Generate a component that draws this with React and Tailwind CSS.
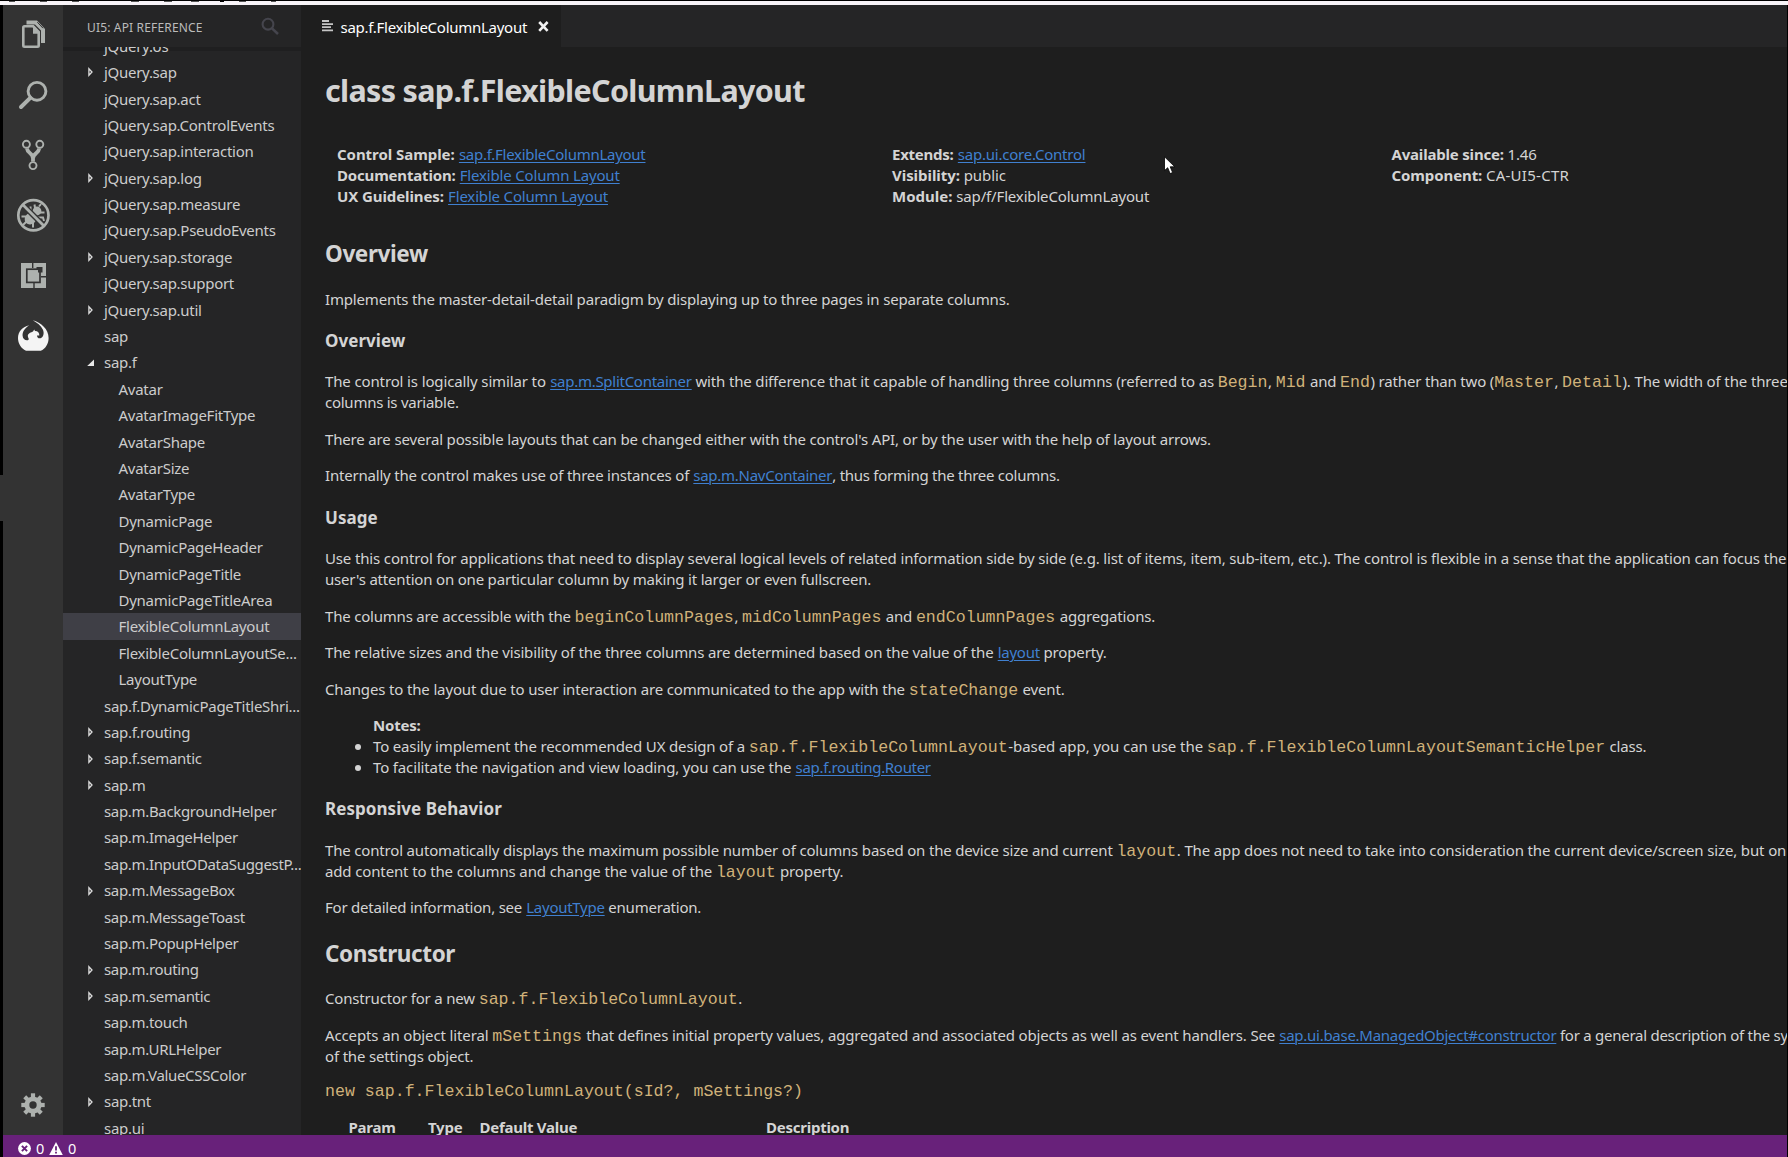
import React from "react";
import clsx from "clsx";

/* Activity bar icons: each svg's viewBox is its own 60px slot of the bar. */
const ICON = "#adb1ae";

function FilesIcon() {
  return (
    <svg className="size-[60px]" viewBox="3 5 60 60" fill="none" stroke={ICON}>
      <path d="M26.5 20.6H37L45 29V43H41V30.5L35 24.5H26.5Z" fill={ICON} stroke="none" />
      <path d="M37.3 22.2L43 28.2" stroke="#333" strokeWidth="1" />
      <path d="M24.5 26.3H33.2L38.7 32V45.5Q38.7 46.7 37.5 46.7H24.5Q23.3 46.7 23.3 45.5V27.5Q23.3 26.3 24.5 26.3Z" fill="#333" strokeWidth="2.6" />
      <path d="M33 26.5V33.7H39V31.5L34.5 26.5Z" fill={ICON} stroke="none" />
    </svg>
  );
}

function SearchIcon() {
  return (
    <svg className="size-[60px]" viewBox="3 65 60 60" fill="none" stroke={ICON}>
      <circle cx="37" cy="91.3" r="8.9" strokeWidth="2.9" />
      <path d="M30.3 97.8L21 107" strokeWidth="4" strokeLinecap="round" />
    </svg>
  );
}

function GitIcon() {
  return (
    <svg className="size-[60px]" viewBox="3 125 60 60" fill="none" stroke={ICON}>
      <circle cx="26.4" cy="144.3" r="3.5" strokeWidth="1.9" />
      <circle cx="39.8" cy="144.3" r="3.5" strokeWidth="1.9" />
      <circle cx="33" cy="165.6" r="3.5" strokeWidth="1.9" />
      <path d="M27 148.5C27.5 153.5 33 153 33 158.5V161.5M39.2 148.5C38.7 153.5 33 153 33 158.5" strokeWidth="3.8" />
    </svg>
  );
}

function DebugIcon() {
  return (
    <svg className="size-[60px]" viewBox="3 185 60 60" fill="none" stroke={ICON}>
      <ellipse cx="30.8" cy="218.4" rx="5.6" ry="6.6" transform="rotate(45 30.8 218.4)" fill={ICON} stroke="none" />
      <circle cx="37" cy="211" r="4.4" fill={ICON} stroke="none" />
      <path d="M30.5 213V206.5M35 208L34.5 204.5M40 212.5H44.5M39 206.5L41 204M27 216.5H21.5M28 220L23 225M33 221.5V227.5M36 217.5H43L44 221" strokeWidth="2" />
      <path d="M23 205L44 226" stroke="#333" strokeWidth="5.4" />
      <path d="M22.6 204.6L44 226" strokeWidth="2.8" />
      <circle cx="33.4" cy="215.3" r="15.1" strokeWidth="2.7" />
    </svg>
  );
}

function ExtensionsIcon() {
  return (
    <svg className="size-[60px]" viewBox="3 245 60 60">
      <rect x="21" y="263" width="25" height="25" fill={ICON} />
      <g stroke="#333" fill="none">
        <path d="M32.7 263V268M41 276.7H46M34 283V288" strokeWidth="1.4" />
        <rect x="26.8" y="269.2" width="13.2" height="13.2" strokeWidth="1.7" />
      </g>
      <path d="M36.5 267H42.5V272.5H38V269H36.5Z" fill="#333" />
    </svg>
  );
}

function PhoenixIcon() {
  return (
    <svg className="size-[60px]" viewBox="3 305 60 60">
      <path
        d="M32.8 320.2C41 322.5 48.6 329 48.6 338C48.6 343.8 45.5 348.8 40.8 350.8H26C21 348.4 18 343.5 18 338C18 331.5 22.5 326.6 29.3 325.2C25 328 22.3 331.5 22.6 335.8C22.8 339 25.4 340.8 27.8 340.2C30.4 339.4 27 337.4 28 334.8C28.8 332.8 31 332.4 33 331.4L34.2 329.6L35 331C38 331 39.5 333 39.3 335.6L37 335.4C37 337.2 38.3 338.8 40.5 338.2C43.5 337 44.5 333 42.8 329.4C41 325.8 37 322.5 32.8 320.2Z"
        fill="#f4f4f4"
      />
    </svg>
  );
}

function GearIcon() {
  return (
    <svg className="size-[60px]" viewBox="3 1075 60 60">
      <g fill={ICON}>
        <rect x="30.9" y="1093.3" width="4.2" height="23.4" />
        <rect x="30.9" y="1093.3" width="4.2" height="23.4" transform="rotate(45 33 1105)" />
        <rect x="30.9" y="1093.3" width="4.2" height="23.4" transform="rotate(90 33 1105)" />
        <rect x="30.9" y="1093.3" width="4.2" height="23.4" transform="rotate(135 33 1105)" />
        <circle cx="33" cy="1105" r="8.6" />
      </g>
      <circle cx="33" cy="1105" r="3.7" fill="#333" />
    </svg>
  );
}

const TREE = [
  ["jQuery.os"],
  ["jQuery.sap", "closed"],
  ["jQuery.sap.act"],
  ["jQuery.sap.ControlEvents"],
  ["jQuery.sap.interaction"],
  ["jQuery.sap.log", "closed"],
  ["jQuery.sap.measure"],
  ["jQuery.sap.PseudoEvents"],
  ["jQuery.sap.storage", "closed"],
  ["jQuery.sap.support"],
  ["jQuery.sap.util", "closed"],
  ["sap"],
  ["sap.f", "open"],
  ["Avatar", "child"],
  ["AvatarImageFitType", "child"],
  ["AvatarShape", "child"],
  ["AvatarSize", "child"],
  ["AvatarType", "child"],
  ["DynamicPage", "child"],
  ["DynamicPageHeader", "child"],
  ["DynamicPageTitle", "child"],
  ["DynamicPageTitleArea", "child"],
  ["FlexibleColumnLayout", "selected"],
  ["FlexibleColumnLayoutSe...", "child"],
  ["LayoutType", "child"],
  ["sap.f.DynamicPageTitleShri..."],
  ["sap.f.routing", "closed"],
  ["sap.f.semantic", "closed"],
  ["sap.m", "closed"],
  ["sap.m.BackgroundHelper"],
  ["sap.m.ImageHelper"],
  ["sap.m.InputODataSuggestP..."],
  ["sap.m.MessageBox", "closed"],
  ["sap.m.MessageToast"],
  ["sap.m.PopupHelper"],
  ["sap.m.routing", "closed"],
  ["sap.m.semantic", "closed"],
  ["sap.m.touch"],
  ["sap.m.URLHelper"],
  ["sap.m.ValueCSSColor"],
  ["sap.tnt", "closed"],
  ["sap.ui"],
];

function TreeRow({ label, kind }) {
  const nested = kind === "child" || kind === "selected";
  const tracking = label.startsWith("sap.m.") ? "tracking-[-0.33px]" : nested ? "tracking-[-0.25px]" : "tracking-[-0.28px]";
  return (
    <div className={clsx("flex h-[26.4px] shrink-0 items-center pl-[24px]", kind === "selected" && "bg-[#3f3f46]")}>
      <span className={clsx("shrink-0", nested ? "w-[31.5px]" : "w-[17px]")}>
        {kind === "closed" && (
          <svg className="h-[10px] w-[8px]" viewBox="0 0 8 10">
            <path d="M1.9 1.7L5 5L1.9 8.3Z" fill="none" stroke="#dcdcdc" strokeWidth="1.3" />
          </svg>
        )}
        {kind === "open" && (
          <svg className="h-[10px] w-[8px]" viewBox="0 0 8 10">
            <path d="M7 1.4V8H0.2Z" fill="#e8e8e8" />
          </svg>
        )}
      </span>
      <span className={clsx("whitespace-nowrap", tracking)}>{label}</span>
    </div>
  );
}

const A = ({ children, t = "tracking-[-0.27px]" }) => (
  <a className={clsx("ml-[0.5px] text-[#4080d0] underline decoration-1 underline-offset-2", t)}>{children}</a>
);
const C = ({ children }) => (
  <code className="mr-[0.6px] font-['Liberation_Mono',monospace] text-[16.6px] leading-[0] tracking-normal text-[#d0b27a]">{children}</code>
);
const B = ({ children, t = "tracking-[-0.1px]" }) => <b className={clsx("font-bold", t)}>{children}</b>;
const P = ({ children, className }) => <p className={clsx("whitespace-nowrap", className)}>{children}</p>;
const H3 = ({ children, className }) => (
  <h3 className={clsx("text-[17px] font-bold tracking-[0.05px]", className)}>{children}</h3>
);
const H2 = ({ children, className }) => (
  <h2 className={clsx("text-[22.5px] font-bold tracking-[-0.4px]", className)}>{children}</h2>
);

function Article() {
  return (
    <article className="h-[1088px] overflow-hidden pl-[24px] text-[15px] leading-[21px] tracking-[-0.17px] text-[#d4d4d4]">
      <h1 className="mt-[33px] text-[30.5px] font-bold tracking-[-0.68px] whitespace-nowrap">class sap.f.FlexibleColumnLayout</h1>

      <div className="mt-[43px] flex pl-[12px] whitespace-nowrap">
        <div className="w-[555px]">
          <div><B t="tracking-[-0.05px]">Control Sample:</B> <A>sap.f.FlexibleColumnLayout</A></div>
          <div><B t="tracking-[-0.18px]">Documentation:</B> <A t="tracking-[-0.17px]">Flexible Column Layout</A></div>
          <div><B>UX Guidelines:</B> <A t="tracking-[-0.17px]">Flexible Column Layout</A></div>
        </div>
        <div className="w-[499.5px]">
          <div><B t="tracking-[-0.24px]">Extends:</B> <A t="tracking-[-0.23px]">sap.ui.core.Control</A></div>
          <div><B t="tracking-[-0.05px]">Visibility:</B> <span className="tracking-[-0.05px]">public</span></div>
          <div><B t="tracking-[0.03px]">Module:</B> <span className="tracking-[-0.16px]">sap/f/FlexibleColumnLayout</span></div>
        </div>
        <div>
          <div><B t="tracking-[-0.19px]">Available since:</B> <span className="tracking-[-0.2px]">1.46</span></div>
          <div><B>Component:</B> <span className="tracking-[0.27px]">CA-UI5-CTR</span></div>
        </div>
      </div>

      <H2 className="mt-[36px]">Overview</H2>
      <P className="mt-[25px]">Implements the master-detail-detail paradigm by displaying up to three pages in separate columns.</P>

      <H3 className="mt-[20px]">Overview</H3>
      <P className="mt-[20px]">
        <span className="tracking-[-0.13px]">The control is logically similar to </span><A>sap.m.SplitContainer</A><span className="tracking-[-0.155px]"> with the difference that it capable of handling three columns (referred to as </span><C>Begin</C>, <C>Mid</C> and <C>End</C>) rather than two (<C>Master</C>, <C>Detail</C><span className="tracking-[-0.13px]">). The width of the three</span>
        <br />
        <span className="tracking-[-0.26px]">columns is variable.</span>
      </P>
      <P className="mt-[16px] tracking-[-0.16px]">There are several possible layouts that can be changed either with the control's API, or by the user with the help of layout arrows.</P>
      <P className="mt-[15px] tracking-[-0.2px]">
        Internally the control makes use of three instances of <A>sap.m.NavContainer</A><span className="tracking-[-0.26px]">, thus forming the three columns.</span>
      </P>

      <H3 className="mt-[21px]">Usage</H3>
      <P className="mt-[20px] tracking-[-0.145px]">
        Use this control for applications that need to display several logical levels of related information side by side (e.g. list of items, item, sub-item, etc.). The control is flexible in a sense that the application can focus the
        <br />
        <span className="tracking-[-0.19px]">user's attention on one particular column by making it larger or even fullscreen.</span>
      </P>
      <P className="mt-[16px]">
        <span className="tracking-[-0.2px]">The columns are accessible with the </span><C>beginColumnPages</C>, <C>midColumnPages</C> and <C>endColumnPages</C> aggregations.
      </P>
      <P className="mt-[15px] tracking-[-0.155px]">
        The relative sizes and the visibility of the three columns are determined based on the value of the <A>layout</A> property.
      </P>
      <P className="mt-[16px] tracking-[-0.15px]">
        Changes to the layout due to user interaction are communicated to the app with the <C>stateChange</C> event.
      </P>

      <div className="mt-[15px] pl-[48px] whitespace-nowrap tracking-[-0.155px]">
        <B t="tracking-[-0.2px]">Notes:</B>
        <ul>
          <li className="-ml-[18px] flex items-center">
            <span className="mr-[12px] size-[6px] rounded-full bg-[#d4d4d4]" />
            <span>To easily implement the recommended UX design of a <C>sap.f.FlexibleColumnLayout</C><span className="tracking-[-0.07px]">-based app, you can use the </span><C>sap.f.FlexibleColumnLayoutSemanticHelper</C> class.</span>
          </li>
          <li className="-ml-[18px] flex items-center">
            <span className="mr-[12px] size-[6px] rounded-full bg-[#d4d4d4]" />
            <span className="tracking-[-0.145px]">To facilitate the navigation and view loading, you can use the <A t="tracking-[-0.32px]">sap.f.routing.Router</A></span>
          </li>
        </ul>
      </div>

      <H3 className="mt-[20px]">Responsive Behavior</H3>
      <P className="mt-[21px]">
        <span className="tracking-[-0.175px]">The control automatically displays the maximum possible number of columns based on the device size and current </span><C>layout</C><span className="tracking-[-0.135px]">. The app does not need to take into consideration the current device/screen size, but on</span>
        <br />
        <span className="tracking-[-0.135px]">add content to the columns and change the value of the <C>layout</C> property.</span>
      </P>
      <P className="mt-[15px] tracking-[-0.22px]">
        For detailed information, see <A>LayoutType</A> enumeration.
      </P>

      <H2 className="mt-[25px]">Constructor</H2>
      <P className="mt-[24px]">
        Constructor for a new <C>sap.f.FlexibleColumnLayout</C>.
      </P>
      <P className="mt-[16px]">
        <span className="tracking-[-0.13px]">Accepts an object literal </span><C>mSettings</C><span className="tracking-[-0.17px]"> that defines initial property values, aggregated and associated objects as well as event handlers. See </span><A>sap.ui.base.ManagedObject#constructor</A><span className="tracking-[-0.26px]"> for a general description of the sy</span>
        <br />
        of the settings object.
      </P>
      <P className="mt-[13px]"><C>new sap.f.FlexibleColumnLayout(sId?, mSettings?)</C></P>

      <div className="mt-[16px] flex pl-[23.5px] font-bold tracking-[-0.25px]">
        <span className="w-[79.5px]">Param</span>
        <span className="w-[51.5px]">Type</span>
        <span className="w-[286.5px]">Default Value</span>
        <span>Description</span>
      </div>
    </article>
  );
}

export default function App() {
  return (
    <div className="relative flex h-[1157px] w-[1788px] flex-col overflow-hidden bg-black font-['Noto_Sans','Open_Sans',sans-serif] text-[15px] text-[#cccccc]">
      <div className="mt-px flex h-[4px] shrink-0 gap-[25px] bg-[#f8f4f8] pl-[9px]">
        <span className="h-px w-[6px] bg-[#555]" />
        <span className="h-px w-[7px] bg-[#555]" />
        <span className="h-px w-[7px] bg-[#555]" />
        <span className="ml-[27px] h-px w-[8px] bg-[#555]" />
        <span className="h-px w-[8px] bg-[#555]" />
        <span className="-ml-[6px] h-px w-[8px] bg-[#555]" />
        <span className="-ml-[4px] h-px w-[4px] bg-black" />
        <span className="-ml-[10px] h-px w-[7px] bg-[#555]" />
        <span className="h-px w-[5px] bg-[#555]" />
      </div>

      <div className="flex h-[1130px] shrink-0 pr-px">
        <div className="flex w-[3px] shrink-0 flex-col justify-start pt-[470px]">
          <span className="h-[46px] bg-[#333333]" />
        </div>

        <nav className="flex w-[60px] shrink-0 flex-col bg-[#333333]">
          <FilesIcon />
          <SearchIcon />
          <GitIcon />
          <DebugIcon />
          <ExtensionsIcon />
          <PhoenixIcon />
          <div className="mt-auto">
            <GearIcon />
          </div>
        </nav>

        <aside className="flex w-[238px] shrink-0 flex-col overflow-hidden bg-[#252526]">
          <header className="flex h-[42px] shrink-0 items-center justify-between pr-[21px] pl-[24px]">
            <span className="mt-[4px] text-[12px] tracking-[0.16px] text-[#bbbbbb]">UI5: API REFERENCE</span>
            <svg className="size-[20px]" viewBox="260 16 20 20" fill="none" stroke="#45454d">
              <circle cx="268" cy="24.2" r="5.4" strokeWidth="2.1" />
              <path d="M272 28.4L278 34" strokeWidth="2.6" />
            </svg>
          </header>
          <div className="relative min-h-0 flex-1 overflow-hidden">
            <div className="absolute inset-x-0 top-0 h-[4px] bg-[#1f1f20]" />
            <div className="relative -mt-[14.2px] flex flex-col">
              {TREE.map(([label, kind]) => (
                <TreeRow key={label} label={label} kind={kind} />
              ))}
            </div>
          </div>
        </aside>

        <main className="min-w-0 flex-1 overflow-hidden bg-[#1e1e1e]">
          <div className="flex h-[42px] bg-[#252526]">
            <div className="flex w-[260px] items-center bg-[#1e1e1e] pl-[21px]">
              <svg className="h-[12px] w-[11px]" viewBox="0 0 11 12" fill="#c5c5c5">
                <path d="M0 0H7V2H0ZM0 3.3H11V4.9H0ZM0 6.3H9V8H0ZM0 9.4H11V11.2H0Z" />
              </svg>
              <span className="mt-[2px] ml-[7.5px] w-[197.5px] tracking-[-0.27px] whitespace-nowrap text-white">sap.f.FlexibleColumnLayout</span>
              <svg className="size-[11px]" viewBox="0 0 11 11" stroke="#f2f2f2" strokeWidth="2.6">
                <path d="M1.2 1L9.6 9.8M9.6 1L1.2 9.8" />
              </svg>
            </div>
          </div>
          <Article />
        </main>
      </div>

      <footer className="mr-px ml-[3px] flex h-[22px] shrink-0 items-center bg-[#68217a] pl-[15px] text-[14.5px] text-white">
        <svg className="mt-[5px] size-[13px]" viewBox="0 0 13 13">
          <circle cx="6.5" cy="6.5" r="6.4" fill="#fff" />
          <path d="M3.9 3.9L9.1 9.1M9.1 3.9L3.9 9.1" stroke="#68217a" strokeWidth="2" />
        </svg>
        <span className="mt-[5px] ml-[5px] w-[13px]">0</span>
        <svg className="mt-[4px] h-[13px] w-[14px]" viewBox="0 0 14 13">
          <path d="M7 0L13.8 13H0.2Z" fill="#fff" />
          <path d="M7 4.2V8.6M7 9.8V11.6" stroke="#68217a" strokeWidth="1.8" />
        </svg>
        <span className="mt-[5px] ml-[5px]">0</span>
      </footer>

      <svg className="absolute top-[156px] left-[1164px] h-[20px] w-[13px]" viewBox="0 0 13 20">
        <path d="M0.5 0.8V14.6L3.7 11.7L6.1 17.6L8.6 16.5L6.2 10.8H10.8Z" fill="#fff" stroke="#000" strokeWidth="0.8" />
      </svg>
    </div>
  );
}
